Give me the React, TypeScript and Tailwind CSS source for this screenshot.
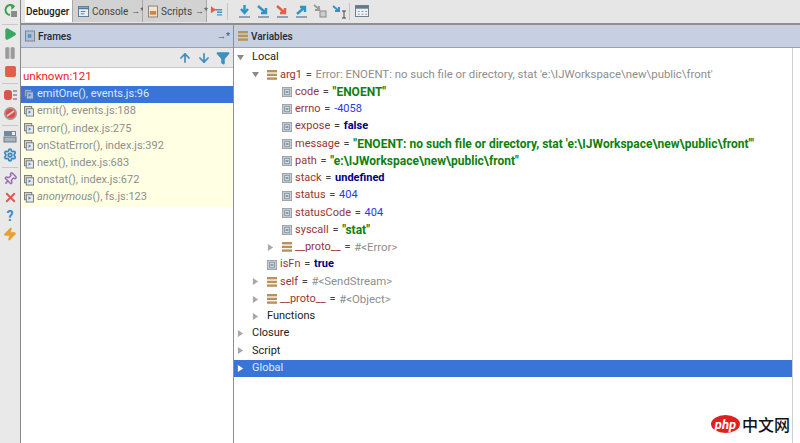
import { ArrowUp, ArrowDown, Filter, Play, Pause, Square, X, Settings, Pin, Zap } from "lucide-react";
import type { ReactNode } from "react";

const FONT = "font-['Roboto','Noto_Sans',sans-serif]";

function FrameIcon({ dim }: { dim?: boolean }) {
  return (
    <svg width="10" height="11" viewBox="0 0 11 12" className={`shrink-0 ${dim ? "opacity-60" : ""}`}>
      <rect x="0.5" y="0.5" width="8" height="8" fill="#d8d8d8" stroke="#777" />
      <rect x="2.5" y="3" width="8" height="8" fill="#e4e8ec" stroke="#777" />
      <path d="M5 5l3 1.5-3 2z" fill="#3a8cc4" />
    </svg>
  );
}

function FieldIcon() {
  return (
    <svg width="10" height="10" viewBox="0 0 11 11" className="shrink-0">
      <rect x="0.5" y="0.5" width="10" height="10" fill="#c9ced3" stroke="#9aa0a6" />
      <rect x="3" y="2.5" width="5" height="6" fill="#f0f2f4" stroke="#6a7f90" strokeWidth="0.8" />
      <path d="M4.5 4v3M6.5 4v3M4.5 5.5h2" stroke="#44647c" strokeWidth="0.8" />
    </svg>
  );
}

function StackIcon() {
  return (
    <svg width="10" height="10" viewBox="0 0 10 10" className="shrink-0">
      <rect y="0" width="10" height="2.4" fill="#b8925a" />
      <rect y="3.7" width="10" height="2.4" fill="#b8925a" />
      <rect y="7.4" width="10" height="2.4" fill="#b8925a" />
    </svg>
  );
}

function Caret({ open, light }: { open?: boolean; light?: boolean }) {
  const color = light ? "#ffffff" : open ? "#8a8a8a" : "#a8a8a8";
  return (
    <svg width="7" height="7" viewBox="0 0 8 8" className="shrink-0">
      {open ? <path d="M0 1h8L4 7z" fill={color} /> : <path d="M1 0l6 4-6 4z" fill={color} />}
    </svg>
  );
}

function StepIcon({ d, color }: { d: string; color: string }) {
  return (
    <svg width="15" height="15" viewBox="0 0 15 15" fill="none" className="shrink-0">
      <path d={d} stroke={color} strokeWidth="2.4" />
      <path d="M2 13h11" stroke="#7f8f9c" strokeWidth="1.6" />
    </svg>
  );
}

function PinMark() {
  return <span className="shrink-0 whitespace-nowrap text-[9px] leading-none text-[#555]">→*</span>;
}

function Slot({ children }: { children: ReactNode }) {
  return <div className="flex h-[18.5px] shrink-0 items-center justify-center">{children}</div>;
}

function SideSep() {
  return <div className="my-[2px] h-px w-4 shrink-0 bg-[#c8c8c8]" />;
}

function SideBar() {
  return (
    <div className="flex w-[21px] shrink-0 flex-col items-center border-r border-[#8a8a8a] bg-[#e9e9e9] pt-[3px]">
      <svg width="15" height="15" viewBox="0 0 15 15" fill="none" className="shrink-0">
        <path d="M11 3.5A5 5 0 1 0 7 12" stroke="#3aa04a" strokeWidth="2" />
        <path d="M8 1l4 2.5L8.5 7z" fill="#3aa04a" />
        <rect x="8" y="8" width="6" height="6" fill="#8c8c8c" />
      </svg>
      <div className="mt-[6px] h-px w-4 shrink-0 bg-[#c8c8c8]" />
      <Slot>
        <Play size={14} className="fill-[#3aa860] text-[#3aa860]" />
      </Slot>
      <Slot>
        <Pause size={14} className="fill-[#9a9a9a] text-[#9a9a9a]" />
      </Slot>
      <Slot>
        <Square size={13} className="fill-[#e0604c] text-[#e0604c]" />
      </Slot>
      <SideSep />
      <Slot>
        <svg width="15" height="14" viewBox="0 0 15 14">
          <rect x="1" y="2" width="8" height="10" rx="3" fill="#d9534f" />
          <path d="M10 3h4M10 7h4M10 11h4" stroke="#888" strokeWidth="1.5" />
        </svg>
      </Slot>
      <Slot>
        <svg width="15" height="15" viewBox="0 0 15 15">
          <circle cx="7.5" cy="7.5" r="6.5" fill="#b08c8c" />
          <circle cx="7.5" cy="7.5" r="4.6" fill="#dc4c46" />
          <path d="M4 10l7-5" stroke="#e8d0d0" strokeWidth="1.6" />
        </svg>
      </Slot>
      <SideSep />
      <Slot>
        <svg width="14" height="13" viewBox="0 0 14 13">
          <rect x="1" y="1" width="12" height="5" fill="#6d8aa4" />
          <rect x="9" y="2" width="3" height="3" fill="#e8eef4" />
          <rect x="1" y="7" width="12" height="5" fill="#a9b4be" stroke="#6c7a86" />
        </svg>
      </Slot>
      <Slot>
        <Settings size={14} strokeWidth={3} className="text-[#3a86c0]" />
      </Slot>
      <SideSep />
      <Slot>
        <Pin size={14} strokeWidth={2.6} className="rotate-45 text-[#9a6cb0]" />
      </Slot>
      <Slot>
        <X size={15} strokeWidth={3} className="text-[#dc5a4c]" />
      </Slot>
      <Slot>
        <span className="text-[14px] leading-[16px] font-bold text-[#3a8cc4]">?</span>
      </Slot>
      <Slot>
        <Zap size={14} className="fill-[#e8a030] text-[#e8a030]" />
      </Slot>
    </div>
  );
}

function Tab({ label, icon, active, width }: { label: string; icon?: ReactNode; active?: boolean; width: string }) {
  return (
    <div
      className={`flex h-[22px] shrink-0 items-center gap-[3px] border-r border-[#a8a8a8] ${width} ${
        active ? "bg-white pl-[1px]" : "bg-[#d2d2d2] pr-[2px] pl-[5px] text-[#444]"
      }`}
    >
      {icon}
      <span className={active ? "font-medium text-[#222]" : "flex-1"}>{label}</span>
      {!active && <PinMark />}
    </div>
  );
}

function TopBar() {
  return (
    <div className="flex h-[25px] shrink-0 items-start border-b-2 border-[#8f8f8f] bg-[#e6e6e6] pl-[4px] text-[10px]">
      <Tab label="Debugger" active width="w-[48px]" />
      <Tab
        label="Console"
        width="w-[70px]"
        icon={
          <svg width="11" height="11" viewBox="0 0 12 12" className="shrink-0">
            <rect x="0.5" y="0.5" width="11" height="11" fill="#e8eef4" stroke="#5a7690" />
            <path d="M0 2.5h12" stroke="#5a7690" strokeWidth="2" />
            <path d="M3 6h5M3 8.5h4" stroke="#5a7690" />
          </svg>
        }
      />
      <Tab
        label="Scripts"
        width="w-[64px]"
        icon={
          <svg width="10" height="13" viewBox="0 0 11 13" className="shrink-0">
            <rect x="0.5" y="0.5" width="10" height="12" fill="#f0e4d8" stroke="#8a7a6c" />
            <path d="M2 6h7v4H2z" fill="#d08440" />
          </svg>
        }
      />
      <div className="flex h-[22px] items-center gap-[4px] pl-[3px]">
        <svg width="13" height="14" viewBox="0 0 15 15" className="shrink-0">
          <path d="M1 2l6 4-6 4z" fill="#e0604c" />
          <path d="M6 6h8M8 9h6M8 12h6" stroke="#4a90c0" strokeWidth="1.6" />
        </svg>
        <div className="h-[17px] w-px bg-[#c4c4c4]" />
        <span className="w-[1px]" />
        <StepIcon d="M7.5 1v7M4 5l3.5 4L11 5" color="#2f94c8" />
        <StepIcon d="M2 2l8 7M10 4v5H5" color="#2f94c8" />
        <StepIcon d="M2 2l8 7M10 4v5H5" color="#e0604c" />
        <StepIcon d="M3 10l8-7M6 3h5v5" color="#2f94c8" />
        <svg width="15" height="15" viewBox="0 0 15 15" fill="none" className="shrink-0">
          <path d="M1 1l6 5M6 2v4H2" stroke="#9a9a9a" strokeWidth="1.8" />
          <rect x="7" y="7" width="6" height="6" fill="#ccc" stroke="#888" />
        </svg>
        <svg width="15" height="15" viewBox="0 0 15 15" fill="none" className="shrink-0">
          <path d="M1 2l6 5M7 3v4H3" stroke="#2f94c8" strokeWidth="2" />
          <path d="M10 7h4M12 7v7M10 14h4" stroke="#444" />
        </svg>
        <div className="-ml-[2px] mr-[1px] h-[17px] w-px bg-[#c4c4c4]" />
        <svg width="14" height="12" viewBox="0 0 15 13" className="shrink-0">
          <rect x="0.5" y="0.5" width="14" height="12" fill="#eef2f6" stroke="#64788a" />
          <rect x="1" y="1" width="13" height="3" fill="#64788a" />
          <path d="M3 7h2M7 7h2M11 7h2M3 10h2M7 10h2M11 10h2" stroke="#7d8e9c" />
        </svg>
      </div>
    </div>
  );
}

function PanelHeader({ icon, title, pin }: { icon: ReactNode; title: string; pin?: boolean }) {
  return (
    <div className="flex h-[23px] shrink-0 items-center gap-[3px] border-b border-[#9aa4b0] bg-[#c6d0e0] pr-[3px] pl-[4px] text-[10px] font-medium text-[#1f2a36]">
      {icon}
      <span className="flex-1">{title}</span>
      {pin && <PinMark />}
    </div>
  );
}

const FRAMES = [
  { fn: "emit()", rest: ", events.js:188" },
  { fn: "error()", rest: ", index.js:275" },
  { fn: "onStatError()", rest: ", index.js:392" },
  { fn: "next()", rest: ", index.js:683" },
  { fn: "onstat()", rest: ", index.js:672" },
  { fn: "anonymous", rest: "(), fs.js:123", italic: true },
];

function FramesPanel() {
  return (
    <div className="flex w-[213px] shrink-0 flex-col border-r border-[#8f8f8f]">
      <PanelHeader
        title="Frames"
        pin
        icon={
          <svg width="10" height="12" viewBox="0 0 11 12">
            <rect x="0.5" y="0.5" width="10" height="11" fill="#b4c0d0" stroke="#74808e" />
            <path d="M3 4h4v4H3z" fill="#4f93c4" />
          </svg>
        }
      />
      <div className="flex h-[20px] shrink-0 items-center justify-end gap-[5px] border-b border-[#c8c8c8] bg-[#e8e8e8] pr-[3px]">
        <ArrowUp size={14} strokeWidth={3} className="text-[#3f90c0]" />
        <ArrowDown size={14} strokeWidth={3} className="text-[#3f90c0]" />
        <Filter size={14} className="fill-[#3f90c0] text-[#3f90c0]" />
      </div>
      <div className="flex h-[18px] shrink-0 items-center pl-[2px] text-[11.5px] text-[#f01818]">unknown:121</div>
      <div className="flex h-[17px] shrink-0 items-center gap-[3px] bg-[#3875d7] pl-[3px] text-[11px] text-[#dfe9f8]">
        <FrameIcon dim />
        <span>emitOne(), events.js:96</span>
      </div>
      <div className="shrink-0 bg-[#ffffe4] pb-[1px]">
        {FRAMES.map((f) => (
          <div key={f.fn} className="flex h-[17.2px] items-center gap-[3px] pl-[3px] text-[11px] text-[#8e8e8e]">
            <FrameIcon />
            <span>
              <span className={f.italic ? "italic" : ""}>{f.fn}</span>
              {f.rest}
            </span>
          </div>
        ))}
      </div>
      <div className="flex-1 bg-white" />
    </div>
  );
}

type VarKind = "str" | "num" | "kw" | "obj";
const VALUE_CLASS: Record<VarKind, string> = {
  str: "text-[12px] font-bold text-[#108010]",
  num: "text-[#2a3ce0]",
  kw: "font-bold text-[#000080]",
  obj: "text-[11.4px] text-[#8e8e8e]",
};

type Row = {
  indent: number;
  caret?: "open" | "closed";
  icon?: "field" | "stack";
  name: string;
  value?: string;
  kind?: VarKind;
  selected?: boolean;
};

const ROWS: Row[] = [
  { indent: 3, caret: "open", name: "Local" },
  { indent: 18, caret: "open", icon: "stack", name: "arg1", value: "Error: ENOENT: no such file or directory, stat 'e:\\IJWorkspace\\new\\public\\front'", kind: "obj" },
  { indent: 33, icon: "field", name: "code", value: '"ENOENT"', kind: "str" },
  { indent: 33, icon: "field", name: "errno", value: "-4058", kind: "num" },
  { indent: 33, icon: "field", name: "expose", value: "false", kind: "kw" },
  { indent: 33, icon: "field", name: "message", value: `"ENOENT: no such file or directory, stat 'e:\\IJWorkspace\\new\\public\\front'"`, kind: "str" },
  { indent: 33, icon: "field", name: "path", value: '"e:\\IJWorkspace\\new\\public\\front"', kind: "str" },
  { indent: 33, icon: "field", name: "stack", value: "undefined", kind: "kw" },
  { indent: 33, icon: "field", name: "status", value: "404", kind: "num" },
  { indent: 33, icon: "field", name: "statusCode", value: "404", kind: "num" },
  { indent: 33, icon: "field", name: "syscall", value: '"stat"', kind: "str" },
  { indent: 33, caret: "closed", icon: "stack", name: "__proto__", value: "#<Error>", kind: "obj" },
  { indent: 18, icon: "field", name: "isFn", value: "true", kind: "kw" },
  { indent: 18, caret: "closed", icon: "stack", name: "self", value: "#<SendStream>", kind: "obj" },
  { indent: 18, caret: "closed", icon: "stack", name: "__proto__", value: "#<Object>", kind: "obj" },
  { indent: 18, caret: "closed", name: "Functions" },
  { indent: 3, caret: "closed", name: "Closure" },
  { indent: 3, caret: "closed", name: "Script" },
  { indent: 3, caret: "closed", name: "Global", selected: true },
];

function VarRow({ row }: { row: Row }) {
  const iconSlot = row.caret ? (
    <span className="flex w-[15px] shrink-0 items-center">
      <Caret open={row.caret === "open"} light={row.selected} />
    </span>
  ) : null;
  return (
    <div
      className={`flex h-[17.25px] items-center whitespace-nowrap text-[11px] ${
        row.selected ? "bg-[#3875d7] text-[#dfe9f8]" : "text-[#222]"
      }`}
      style={{ paddingLeft: row.caret ? row.indent : row.indent + 15 }}
    >
      {iconSlot}
      {row.icon === "field" && <FieldIcon />}
      {row.icon === "stack" && <StackIcon />}
      {row.icon && <span className="w-[3px] shrink-0" />}
      {row.value ? (
        <>
          <span className="text-[#973535]">{row.name}</span>
          <span className="px-[1px] text-[#444]">&nbsp;=&nbsp;</span>
          <span className={VALUE_CLASS[row.kind ?? "obj"]}>{row.value}</span>
        </>
      ) : (
        <span>{row.name}</span>
      )}
    </div>
  );
}

function VariablesPanel() {
  return (
    <div className="flex min-w-0 flex-1 flex-col">
      <PanelHeader title="Variables" icon={<StackIcon />} />
      <div className="flex min-h-0 flex-1 flex-col pr-[7px]">
        <div className="min-h-0 flex-1 border-r border-[#cfcfcf] pt-[1px]">
          {ROWS.map((r, i) => (
            <VarRow key={i} row={r} />
          ))}
        </div>
      </div>
    </div>
  );
}

export default function App() {
  return (
    <div className={`relative flex h-[443px] w-[800px] overflow-hidden bg-white ${FONT}`}>
      <SideBar />
      <div className="flex min-w-0 flex-1 flex-col">
        <TopBar />
        <div className="flex min-h-0 flex-1">
          <FramesPanel />
          <VariablesPanel />
        </div>
      </div>
      {/* watermark */}
      <div className="absolute right-[10px] bottom-[10px] flex items-center gap-[2px]">
        <span className="flex h-[18px] w-[29px] items-center justify-center rounded-[50%] bg-[#e02020] text-[13px] leading-none font-bold text-white italic">
          php
        </span>
        <span className="font-['Noto_Sans_CJK_SC',sans-serif] text-[16px] leading-none font-medium text-[#111]">中文网</span>
      </div>
    </div>
  );
}
